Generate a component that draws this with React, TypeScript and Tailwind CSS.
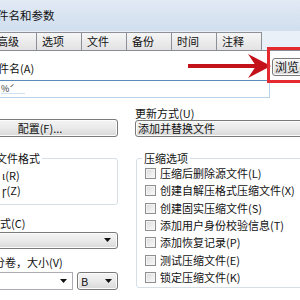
import { ReactNode } from 'react';

const tabs = ['高级', '选项', '文件', '备份', '时间', '注释'];

const options = [
  '压缩后删除源文件(L)',
  '创建自解压格式压缩文件(X)',
  '创建固实压缩文件(S)',
  '添加用户身份校验信息(T)',
  '添加恢复记录(P)',
  '测试压缩文件(E)',
  '锁定压缩文件(K)',
];

function Caret() {
  return (
    <svg width="8" height="5" viewBox="0 0 8 5" className="shrink-0">
      <polygon points="0,0 7,0 3.5,4" fill="#111" />
    </svg>
  );
}

function Btn({ children, className = '' }: { children: ReactNode; className?: string }) {
  return (
    <div
      className={`flex items-center rounded-[3px] border border-[#7a7a7a] bg-linear-to-b from-[#f4f4f4] via-[#eaeaea] to-[#d8d8d8] shadow-[inset_0_0_0_1px_#fcfcfc] ${className}`}
    >
      {children}
    </div>
  );
}

function GroupBox({ title, className = '', titleClass = '', children }: { title: string; className?: string; titleClass?: string; children?: ReactNode }) {
  return (
    <div className={`relative rounded-[3px] border border-[#d5dfe5] ${className}`}>
      <span className={`absolute -top-[8px] whitespace-nowrap bg-white px-[2px] leading-[14px] ${titleClass}`}>{title}</span>
      {children}
    </div>
  );
}

export default function App() {
  return (
    <div className="relative flex h-[300px] w-[300px] flex-col overflow-hidden bg-white font-['Noto_Sans_CJK_SC','Noto_Sans',sans-serif] text-[11px] text-[#111]">
      {/* Title bar */}
      <div className="flex h-[31px] shrink-0 items-center bg-linear-to-b from-[#e2eaf5] to-[#d0deee]">
        <span className="-ml-[3px] text-[11.5px] leading-none">件名和参数</span>
      </div>

      {/* Tabs */}
      <div className="flex h-[19px] shrink-0 items-end bg-[#eaf0f7]">
        <div className="-ml-[9px] flex">
          {tabs.map((t) => (
            <div
              key={t}
              className="-mr-px flex h-[18px] w-[46px] items-center border border-b-0 border-[#8e9097] bg-linear-to-b from-[#f6f6f6] to-[#e2e2e2] pl-[5px] leading-none"
            >
              {t}
            </div>
          ))}
        </div>
      </div>

      {/* Page */}
      <div className="flex flex-1 flex-col border-t border-[#898c95] bg-white">
        {/* Name row */}
        <div className="mt-[7px] flex h-[18px] items-center justify-between">
          <span className="-ml-[2px] mt-[3px] leading-none">件名(A)</span>
          <Btn className="-mr-[40px] h-[18px] w-[68px] pl-[2px] text-[12px]">浏览(B)...</Btn>
        </div>

        {/* Input */}
        <div className="-ml-[10px] mt-[4px] flex h-[18px] w-[280px] items-center border border-[#b9d4ea] border-t-[#5b8cbc] pl-[10px]">
          <span className="border-b border-[#cfe2f3] pr-[10px] text-[9px] leading-none text-[#333]">%ˊ</span>
        </div>

        {/* Config / update mode */}
        <div className="mt-[9px] flex">
          <Btn className="-ml-[38px] mt-[12px] h-[18px] w-[156px] shrink-0 justify-center">配置(F)...</Btn>
          <div className="ml-[17px] flex flex-1 flex-col">
            <span className="h-[13px] leading-[13px]">更新方式(U)</span>
            <Btn className="h-[17px] w-[200px] pl-[2px]">添加并替换文件</Btn>
          </div>
        </div>

        {/* Groups */}
        <div className="mt-[21px] flex items-start">
          <div className="-ml-[38px] flex w-[156px] shrink-0 flex-col">
            <GroupBox title="文件格式" className="h-[47px]" titleClass="left-[31px]">
              <div className="flex flex-col pt-[9px] pl-[39px]">
                <span className="h-[15px] leading-[15px]">ι(R)</span>
                <span className="h-[15px] leading-[15px]">ɼ(Z)</span>
              </div>
            </GroupBox>
            <span className="ml-[38px] mt-[12px] h-[13px] leading-[13px]">式(C)</span>
            <Btn className="mt-[2px] h-[17px] justify-end pr-[5px]">
              <Caret />
            </Btn>
            <span className="ml-[32px] mt-[7px] h-[13px] leading-[13px]">分卷，大小(V)</span>
            <div className="mt-[3px] flex h-[18px] gap-[4px]">
              <div className="flex w-[111px] items-center justify-end border border-[#abadb3] pr-[4px]">
                <Caret />
              </div>
              <Btn className="flex-1 justify-between pl-[3px] pr-[4px]">
                <span className="leading-none">B</span>
                <Caret />
              </Btn>
            </div>
          </div>

          <GroupBox title="压缩选项" className="ml-[18px] h-[130px] w-[200px] shrink-0" titleClass="left-[5px]">
            <div className="flex flex-col pl-[8px] pt-[6px]">
              {options.map((o) => (
                <div key={o} className="flex h-[17.33px] items-center gap-[4px]">
                  <div className="h-[11px] w-[11px] shrink-0 border border-[#8f8f8f] bg-linear-to-br from-[#dadada] to-[#fbfbfb] shadow-[inset_0_0_0_1px_#f4f4f4]" />
                  <span className="whitespace-nowrap leading-none">{o}</span>
                </div>
              ))}
            </div>
          </GroupBox>
        </div>
      </div>

      {/* Red annotation */}
      <svg className="pointer-events-none absolute left-[184px] top-[50px]" width="90" height="32" viewBox="184 50 90 32">
        <line x1="188" y1="66" x2="258" y2="66" stroke="#c3121a" strokeWidth="4" />
        <polygon points="248,54 271,66 248,78 256,66" fill="#c3121a" />
      </svg>
      <div className="pointer-events-none absolute left-[267px] top-[47px] h-[36px] w-[45px] border-[3px] border-[#e42a2e]" />
    </div>
  );
}
